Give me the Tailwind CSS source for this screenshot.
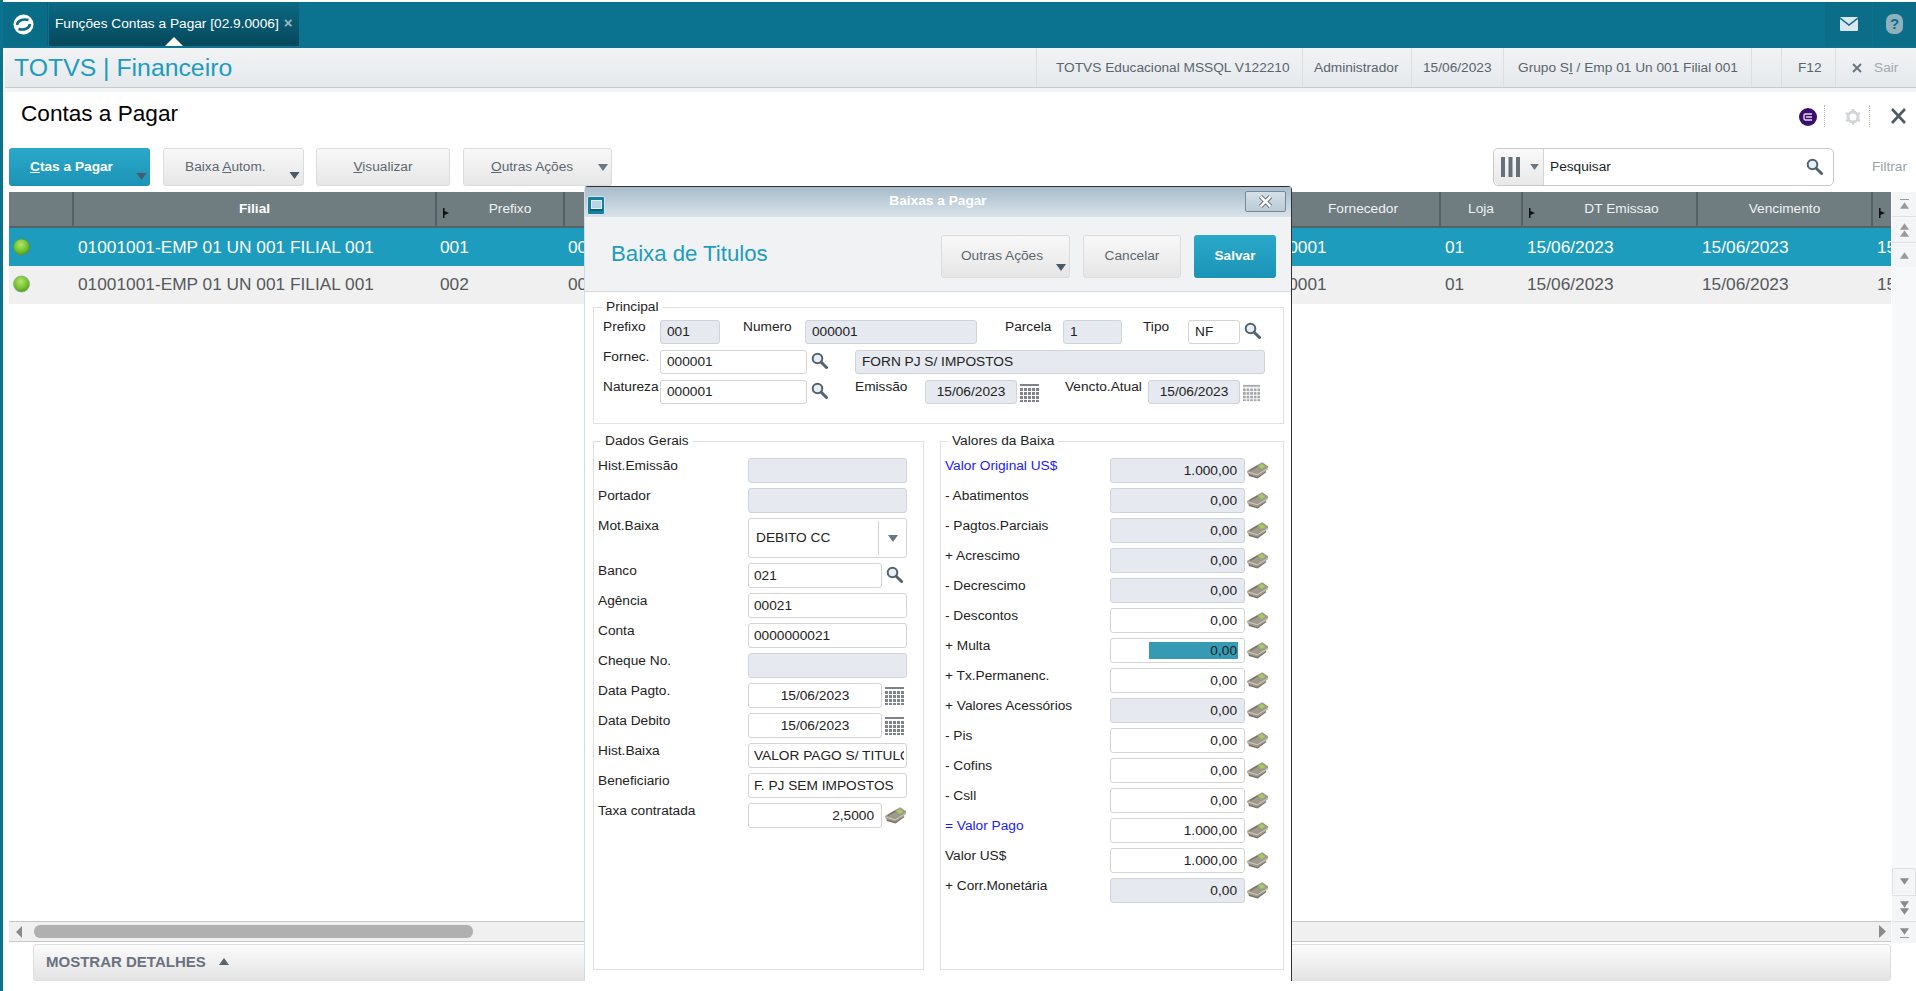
<!DOCTYPE html>
<html lang="pt-BR">
<head>
<meta charset="utf-8">
<title>Baixas a Pagar</title>
<script src="https://cdn.jsdelivr.net/npm/@tailwindcss/browser@4"></script>
</head>
<body class="bg-white font-['Liberation_Sans',Arial,sans-serif] text-[13.7px] leading-[16px] text-[#222]">
<svg class="absolute w-0 h-0" aria-hidden="true">
  <defs>
    <pattern id="gridp" width="4" height="4" patternUnits="userSpaceOnUse"><rect width="3" height="3" fill="#7f8389"/></pattern>
    <radialGradient id="ball" cx="45%" cy="35%" r="65%"><stop offset="0" stop-color="#b5e66a"/><stop offset=".7" stop-color="#6cc02c"/><stop offset="1" stop-color="#4f9a1e"/></radialGradient>
    <symbol id="lupa" viewBox="0 0 17 17"><circle cx="6.500" cy="6.500" r="4.800" fill="#e8eef2" stroke="#52626e" stroke-width="2"/><path d="M10.200 10.200 15.500 15.500" stroke="#52626e" stroke-width="3" stroke-linecap="round"/></symbol>
    <symbol id="cal" viewBox="0 0 20 18"><rect x="0" y="0" width="19" height="2" fill="#7f8389"/><rect x="0" y="3" width="19" height="15" fill="url(#gridp)"/></symbol>
    <symbol id="money" viewBox="0 0 24 18"><path d="M1 10 13 3 17 1 23 5V8L12 16.500 3 14.500 1 11Z" fill="#a09a8c"/><path d="M3 14.500 12 17 21 10.500" fill="none" stroke="#7a7365" stroke-width="1.400"/><path d="M1.500 11 12 14 23 7" fill="none" stroke="#d3d0c7" stroke-width="1"/><path d="M4 9.500 12 5" fill="none" stroke="#77705f" stroke-width="1.400"/><path d="M13 5 16.500 2.500 20 5.500 16.500 8Z" fill="#a2cf58"/></symbol>
    <symbol id="tri" viewBox="0 0 10 7"><path d="M0 0H10L5 7Z" fill="currentColor"/></symbol>
    <symbol id="triup" viewBox="0 0 10 7"><path d="M0 7H10L5 0Z" fill="currentColor"/></symbol>
    <symbol id="mark" viewBox="0 0 6 10"><path d="M0 0H1.500V3L6 5 1.500 7V10H0Z" fill="#111"/></symbol>
  </defs>
</svg>

<div class="relative w-[1916px] h-[991px] overflow-hidden border-l-[3px] border-[#0b7390] flex flex-col">

  <!-- top bar -->
  <div class="mt-[2px] h-[46px] -ml-[3px] bg-[#0b7390] flex shrink-0">
    <div class="w-[48px] h-[44px] bg-[#0a6d88] border-r border-[#0a5f76] flex items-center justify-center">
      <svg width="21" height="21" viewBox="0 0 21 21" fill="none"><circle cx="10.500" cy="10.500" r="10" fill="#fff"/><path d="M4 11C4.500 6.500 10 4.500 15.500 6" stroke="#0a6d88" stroke-width="2.600"/><path d="M5.500 15C11 16.500 16.500 14.500 17 10" stroke="#0a6d88" stroke-width="2.600"/></svg>
    </div>
    <div class="relative ml-px w-[250px] h-[44px] bg-linear-to-b from-[#0b6a83] to-[#06485c] flex items-center pl-[6px] text-white text-[13.7px]">
      <span>Funções Contas a Pagar [02.9.0006]</span>
      <span class="ml-[5px] -mt-[3px] text-[#9db9c4] text-[15px] font-bold">×</span>
      <svg class="absolute left-[116px] bottom-0" width="18" height="9" viewBox="0 0 18 9"><path d="M0 9 9 0 18 9Z" fill="#fff"/></svg>
    </div>
    <div class="ml-auto h-[44px] w-[47px] bg-[#0b6d88] flex items-center justify-center">
      <svg width="18" height="14" viewBox="0 0 18 14"><rect width="18" height="14" rx="1" fill="#dbe7ec"/><path d="M0 1 9 8 18 1" fill="none" stroke="#0b6d88" stroke-width="1.500"/></svg>
    </div>
    <div class="ml-px h-[44px] w-[43px] bg-[#0b6d88] flex items-center justify-center">
      <div class="w-[17px] h-[20px] rounded-[7px] bg-[#8fb0bd] text-[#0b6d88] font-bold text-[15px] flex items-center justify-center">?</div>
    </div>
  </div>

  <!-- module header -->
  <div class="h-[40px] shrink-0 ml-[2px] bg-linear-to-b from-[#f1f3f5] to-[#e6e9ec] border-b border-[#c5cbcf] flex items-center text-[#59656e] text-[13.7px]">
    <div class="ml-[9px] w-[1022px] text-[24.800px] leading-[30px] text-[#1d9cbf]">TOTVS | Financeiro</div>
    <div class="w-[266px] h-full border-l border-[#dcdfe2] flex items-center pl-[19px]">TOTVS Educacional MSSQL V122210</div>
    <div class="w-[109px] h-full border-l border-[#dcdfe2] flex items-center pl-[11px]">Administrador</div>
    <div class="w-[92px] h-full border-l border-[#dcdfe2] flex items-center pl-[11px]">15/06/2023</div>
    <div class="w-[248px] h-full border-l border-[#dcdfe2] flex items-center pl-[14px]"><span>Grupo S<u>I</u> / Emp 01 Un 001 Filial 001</span></div>
    <div class="w-[30px] h-full border-l border-[#dcdfe2]"></div>
    <div class="w-[54px] h-full border-l border-[#dcdfe2] flex items-center pl-[16px]">F12</div>
    <div class="flex-1 h-full border-l border-[#dcdfe2] flex items-center pl-[16px] gap-[12px] text-[#a3abb2]">
      <svg width="10" height="10" viewBox="0 0 10 10"><path d="M1 1 9 9M9 1 1 9" stroke="#6b757d" stroke-width="2"/></svg><span>Sair</span>
    </div>
  </div>
  <div class="h-[4px] shrink-0 bg-[#f3f4f6]"></div>

  <!-- title row -->
  <div class="h-[56px] shrink-0 flex pl-[18px]">
    <div class="pt-[9px] text-[22.600px] leading-[26px] text-black">Contas a Pagar</div>
    <div class="ml-auto pt-[16px] flex items-start">
      <div class="w-[18px] h-[18px] rounded-full bg-[#3b0f6b] flex items-center justify-center">
        <svg width="10" height="8" viewBox="0 0 10 8"><path d="M9 1H2.500A1.500 1.500 0 0 0 1 2.500V5.500A1.500 1.500 0 0 0 2.500 7H9M3 4H9" fill="none" stroke="#e6dcef" stroke-width="1.400"/></svg>
      </div>
      <div class="ml-[7px] h-[22px] -mt-[3px] border-l border-dotted border-[#bbb]"></div>
      <svg class="ml-[20px]" width="16" height="18" viewBox="0 0 16 18"><circle cx="8" cy="9" r="5" fill="none" stroke="#d2d5d8" stroke-width="3"/><path d="M8 1V4M8 14V17M1 5 3.500 6.500M12.500 11.500 15 13M1 13 3.500 11.500M12.500 6.500 15 5" stroke="#d2d5d8" stroke-width="2.400"/></svg>
      <div class="ml-[8px] h-[22px] -mt-[3px] border-l border-dotted border-[#bbb]"></div>
      <svg class="ml-[21px] mr-[10px]" width="15" height="16" viewBox="0 0 15 16"><path d="M1 1 14 15M14 1 1 15" stroke="#4e5a63" stroke-width="2.600"/></svg>
    </div>
  </div>

  <!-- toolbar -->
  <div class="h-[38px] shrink-0 flex pl-[6px] text-[#5c6770]">
    <div class="relative w-[141px] rounded-[3px] bg-linear-to-b from-[#2ba9ca] to-[#1b93b6] flex items-center pl-[21px] text-white font-bold">
      <span><u>C</u>tas a Pagar</span>
      <svg class="absolute right-[3px] bottom-[6px] w-[11px] h-[7px] text-[#4a5a66]"><use href="#tri"/></svg>
    </div>
    <div class="relative ml-[13px] w-[141px] rounded-[3px] border border-[#dcdcdc] bg-linear-to-b from-[#f8f8f8] to-[#e6e6e6] flex items-center pl-[21px]">
      <span>Baixa <u>A</u>utom.</span>
      <svg class="absolute right-[3px] bottom-[6px] w-[11px] h-[7px] text-[#4a5a66]"><use href="#tri"/></svg>
    </div>
    <div class="ml-[12px] w-[134px] rounded-[3px] border border-[#dcdcdc] bg-linear-to-b from-[#f8f8f8] to-[#e6e6e6] flex items-center justify-center"><span><u>V</u>isualizar</span></div>
    <div class="relative ml-[13px] w-[149px] rounded-[3px] border border-[#dcdcdc] bg-linear-to-b from-[#f8f8f8] to-[#e6e6e6] flex items-center pl-[27px]">
      <span><u>O</u>utras Ações</span>
      <svg class="absolute right-[3px] top-[15px] w-[10px] h-[7px] text-[#6b7680]"><use href="#tri"/></svg>
    </div>
    <div class="ml-[881px] w-[341px] rounded-[5px] border border-[#c9c9c9] bg-white flex">
      <div class="w-[50px] rounded-l-[5px] bg-linear-to-b from-[#fafafa] to-[#e8e8e8] border-r border-[#d5d5d5] flex items-center pl-[7px]">
        <svg width="19" height="20" viewBox="0 0 19 20"><path d="M0 0H4V20H0ZM7.500 0H11.500V20H7.500ZM15 0H19V20H15Z" fill="#66707a"/></svg>
        <svg class="ml-[10px] w-[9px] h-[6px] text-[#6b7680]"><use href="#tri"/></svg>
      </div>
      <div class="flex-1 flex items-center pl-[6px] text-[#222]">Pesquisar</div>
      <svg class="mr-[10px] mt-[9px] w-[17px] h-[17px]"><use href="#lupa"/></svg>
    </div>
    <div class="ml-[38px] flex items-center text-[#9aa3aa]">Filtrar</div>
  </div>
  <div class="h-[6px] shrink-0"></div>

  <!-- browse -->
  <div class="flex-1 min-h-0 flex pl-[6px]">
    <div class="w-[1882px] flex flex-col">
      <div class="h-[36px] shrink-0 flex bg-[#6f7c80] text-[#f0f2f3] border-b-2 border-[#566266]">
        <div class="w-[65px] shrink-0 border-r-2 border-[#566266]"></div>
        <div class="w-[363px] shrink-0 border-r-2 border-[#566266] flex items-center justify-center font-bold text-white">Filial</div>
        <div class="relative w-[128px] shrink-0 border-r-2 border-[#566266] flex items-center justify-center pl-[20px]">Prefixo
          <svg class="absolute left-[6px] top-[16px] w-[6px] h-[10px]"><use href="#mark"/></svg></div>
        <div class="w-[700px] shrink-0 border-r-2 border-[#566266]"></div>
        <div class="w-[176px] shrink-0 border-r-2 border-[#566266] flex items-center justify-center pl-[22px]">Fornecedor</div>
        <div class="w-[82px] shrink-0 border-r-2 border-[#566266] flex items-center justify-center">Loja</div>
        <div class="relative w-[175px] shrink-0 border-r-2 border-[#566266] flex items-center justify-center pl-[24px]">DT Emissao
          <svg class="absolute left-[6px] top-[16px] w-[6px] h-[10px]"><use href="#mark"/></svg></div>
        <div class="w-[175px] shrink-0 border-r-2 border-[#566266] flex items-center justify-center">Vencimento</div>
        <div class="relative flex-1"><svg class="absolute left-[6px] top-[16px] w-[6px] h-[10px]"><use href="#mark"/></svg></div>
      </div>
      <div class="h-[38px] shrink-0 flex items-center bg-[#1d9cbd] text-white text-[17.300px] leading-[20px] whitespace-nowrap overflow-hidden">
        <div class="w-[65px] shrink-0 pl-[4px] flex items-center"><svg width="17" height="20" viewBox="0 0 17 20"><circle cx="8.500" cy="10" r="8" fill="url(#ball)" stroke="#5f8f52" stroke-width=".8"/></svg></div>
        <div class="w-[363px] shrink-0 pl-[4px]">01001001-EMP 01 UN 001 FILIAL 001</div>
        <div class="w-[128px] shrink-0 pl-[3px]">001</div>
        <div class="w-[700px] shrink-0 pl-[3px]">000001</div>
        <div class="w-[176px] shrink-0 pl-[4px]">000001</div>
        <div class="w-[82px] shrink-0 pl-[4px]">01</div>
        <div class="w-[175px] shrink-0 pl-[4px]">15/06/2023</div>
        <div class="w-[175px] shrink-0 pl-[4px]">15/06/2023</div>
        <div class="shrink-0 pl-[4px]">15/06/2023</div>
      </div>
      <div class="h-[38px] shrink-0 flex items-center pb-[2px] bg-[#f0f0f0] text-[#55595c] text-[17.300px] leading-[20px] whitespace-nowrap overflow-hidden">
        <div class="w-[65px] shrink-0 pl-[4px] flex items-center"><svg width="17" height="20" viewBox="0 0 17 20"><circle cx="8.500" cy="10" r="8" fill="url(#ball)" stroke="#8aa985" stroke-width=".8"/></svg></div>
        <div class="w-[363px] shrink-0 pl-[4px]">01001001-EMP 01 UN 001 FILIAL 001</div>
        <div class="w-[128px] shrink-0 pl-[3px]">002</div>
        <div class="w-[700px] shrink-0 pl-[3px]">000002</div>
        <div class="w-[176px] shrink-0 pl-[4px]">000001</div>
        <div class="w-[82px] shrink-0 pl-[4px]">01</div>
        <div class="w-[175px] shrink-0 pl-[4px]">15/06/2023</div>
        <div class="w-[175px] shrink-0 pl-[4px]">15/06/2023</div>
        <div class="shrink-0 pl-[4px]">15/06/2023</div>
      </div>
      <div class="flex-1"></div>
      <div class="h-[21px] shrink-0 flex items-center bg-[#f0f0f0] border-y border-[#c8c8c8] relative">
        <svg class="ml-[7px] w-[6px] h-[12px]" viewBox="0 0 6 12"><path d="M6 0V12L0 6Z" fill="#8a8a8a"/></svg>
        <div class="ml-[12px] w-[439px] h-[13px] rounded-[6px] bg-[#b0b0b0]"></div>
        <svg class="ml-auto mr-[5px] w-[7px] h-[13px]" viewBox="0 0 7 13"><path d="M0 0V13L7 6.500Z" fill="#8a8a8a"/></svg>
      </div>
      <div class="h-[2px] shrink-0"></div>
      <div class="ml-[24px] h-[37px] shrink-0 rounded-[3px] border border-[#dedede] bg-linear-to-b from-[#fbfbfb] to-[#e4e4e4] flex items-center pl-[12px] pb-[2px] text-[#6a7280] font-bold text-[15px]">
        <span>MOSTRAR DETALHES</span>
        <svg class="ml-[13px] w-[10px] h-[7px] text-[#5a626c]"><use href="#triup"/></svg>
      </div>
      <div class="h-[10px] shrink-0"></div>
    </div>
    <div class="ml-[1px] w-[24px] h-[751px] flex flex-col bg-[#f7f8fa]">
      <div class="h-[25px] bg-[#f4f5f6] border-b border-[#dfe1e3] flex flex-col items-center justify-center text-[#9a9a9a]"><div class="w-[9px] border-t border-[#9a9a9a] mb-[2px]"></div><svg class="w-[9px] h-[7px]"><use href="#triup"/></svg></div>
      <div class="mt-px h-[25px] bg-[#f4f5f6] border-b border-[#dfe1e3] flex flex-col items-center justify-center text-[#9a9a9a]"><svg class="w-[9px] h-[7px]"><use href="#triup"/></svg><svg class="w-[9px] h-[7px]"><use href="#triup"/></svg></div>
      <div class="mt-px h-[23px] bg-[#f4f5f6] flex items-center justify-center text-[#9a9a9a]"><svg class="w-[9px] h-[7px]"><use href="#triup"/></svg></div>
      <div class="flex-1"></div>
      <div class="h-[26px] bg-[#f4f5f6] border-t border-x border-[#dfe1e3] rounded-t-[3px] flex items-center justify-center text-[#8a8a8a]"><svg class="w-[9px] h-[7px]"><use href="#tri"/></svg></div>
      <div class="mt-px h-[25px] bg-[#f4f5f6] border-t border-[#dfe1e3] flex flex-col items-center justify-center text-[#8a8a8a]"><svg class="w-[9px] h-[7px]"><use href="#tri"/></svg><svg class="w-[9px] h-[7px]"><use href="#tri"/></svg></div>
      <div class="mt-px h-[22px] bg-[#f4f5f6] border-t border-[#dfe1e3] flex flex-col items-center justify-center text-[#8a8a8a]"><svg class="w-[9px] h-[7px]"><use href="#tri"/></svg><div class="w-[9px] border-t border-[#9a9a9a] mt-[2px]"></div></div>
    </div>
  </div>

  <!-- modal -->
  <div class="absolute left-[581px] top-[186px] w-[708px] h-[795px] bg-white border-t border-r border-[#2f3336] border-l border-l-[#cfdce8] rounded-t-[4px] flex flex-col">
    <div class="relative h-[30px] shrink-0 bg-linear-to-b from-[#a9bccb] to-[#d8e3ea] flex items-center justify-center font-bold text-white">
      <div class="absolute left-[2px] top-[9px] w-[18px] h-[19px] rounded-[2px] bg-[#14809f] border border-[#d5e4ec] flex flex-col items-center justify-center">
        <div class="w-[11px] h-[9px] bg-[#b8d4e2] border border-[#e4f0f5]"></div><div class="w-[13px] h-[2px] bg-[#0b5f76]"></div>
      </div>
      <span class="-mt-[3px]">Baixas a Pagar</span>
      <div class="absolute right-[5px] top-[4px] w-[41px] h-[21px] rounded-[2px] border border-[#75899b] bg-linear-to-b from-[#d5dfe7] to-[#bccbd7] flex items-center justify-center">
        <svg width="15" height="15" viewBox="0 0 15 15"><path d="M2.500 2.500 12.500 12.500M12.500 2.500 2.500 12.500" stroke="#5f6a72" stroke-width="4.500"/><path d="M2.500 2.500 12.500 12.500M12.500 2.500 2.500 12.500" stroke="#fff" stroke-width="2.500"/></svg>
      </div>
    </div>
    <div class="h-[75px] shrink-0 bg-[#f0f2f3] border-b border-[#d6d9dc] flex items-center text-[#5c6770]">
      <div class="ml-[26px] w-[330px] text-[22.200px] leading-[28px] text-[#1d9cbf]">Baixa de Titulos</div>
      <div class="relative mt-[4px] w-[129px] h-[43px] rounded-[3px] border border-[#dcdcdc] bg-linear-to-b from-[#f8f8f8] to-[#e6e6e6] flex items-center justify-center pr-[7px]">Outras Ações
        <svg class="absolute right-[3px] bottom-[6px] w-[10px] h-[7px] text-[#4a5a66]"><use href="#tri"/></svg></div>
      <div class="mt-[4px] ml-[13px] w-[98px] h-[43px] rounded-[3px] border border-[#dcdcdc] bg-linear-to-b from-[#f8f8f8] to-[#e6e6e6] flex items-center justify-center">Cancelar</div>
      <div class="mt-[4px] ml-[13px] w-[82px] h-[43px] rounded-[3px] bg-linear-to-b from-[#2ba9ca] to-[#1b93b6] flex items-center justify-center font-bold text-white">Salvar</div>
    </div>

    <div class="pl-[8px]">
      <fieldset class="mt-[7px] w-[691px] h-[125px] border border-[#dcdfe3] pl-[9px] pt-[5px]">
        <legend class="-ml-px px-[4px] leading-[16px]">Principal</legend>
        <div class="flex h-[24px]">
          <span class="w-[57px] -mt-px">Prefixo</span>
          <div class="w-[60px] rounded-[3px] border border-[#cfd3da] bg-[#e6e9f0] flex items-center pl-[6px]">001</div>
          <span class="ml-[23px] w-[62px] -mt-px">Numero</span>
          <div class="w-[172px] rounded-[3px] border border-[#cfd3da] bg-[#e6e9f0] flex items-center pl-[6px]">000001</div>
          <span class="ml-[28px] w-[58px] -mt-px">Parcela</span>
          <div class="w-[59px] rounded-[3px] border border-[#cfd3da] bg-[#e6e9f0] flex items-center pl-[6px]">1</div>
          <span class="ml-[21px] w-[45px] -mt-px">Tipo</span>
          <div class="w-[52px] rounded-[3px] border border-[#d4d4d4] bg-white flex items-center pl-[6px]">NF</div>
          <svg class="ml-[4px] mt-[2px] w-[17px] h-[17px]"><use href="#lupa"/></svg>
        </div>
        <div class="mt-[6px] flex h-[24px]">
          <span class="w-[57px] -mt-px">Fornec.</span>
          <div class="w-[147px] rounded-[3px] border border-[#d4d4d4] bg-white flex items-center pl-[6px]">000001</div>
          <svg class="ml-[4px] mt-[2px] w-[17px] h-[17px]"><use href="#lupa"/></svg>
          <div class="ml-[27px] w-[410px] rounded-[3px] border border-[#cfd3da] bg-[#e6e9f0] flex items-center pl-[6px]">FORN PJ S/ IMPOSTOS</div>
        </div>
        <div class="mt-[6px] flex h-[24px]">
          <span class="w-[57px] -mt-px">Natureza</span>
          <div class="w-[147px] rounded-[3px] border border-[#d4d4d4] bg-white flex items-center pl-[6px]">000001</div>
          <svg class="ml-[4px] mt-[2px] w-[17px] h-[17px]"><use href="#lupa"/></svg>
          <span class="ml-[27px] w-[70px] -mt-px">Emissão</span>
          <div class="w-[92px] rounded-[3px] border border-[#cfd3da] bg-[#e6e9f0] flex items-center justify-center">15/06/2023</div>
          <svg class="ml-[3px] mt-[4px] w-[20px] h-[18px]"><use href="#cal"/></svg>
          <span class="ml-[25px] w-[83px] -mt-px">Vencto.Atual</span>
          <div class="w-[92px] rounded-[3px] border border-[#cfd3da] bg-[#e6e9f0] flex items-center justify-center">15/06/2023</div>
          <svg class="ml-[3px] mt-[4px] w-[18px] h-[18px] opacity-70"><use href="#cal"/></svg>
        </div>
      </fieldset>

      <div class="mt-[9px] flex">
        <fieldset class="w-[331px] h-[537px] border border-[#dcdfe3] pl-[4px] pt-[9px]">
          <legend class="ml-[3px] px-[4px] leading-[16px]">Dados Gerais</legend>
          <div class="flex flex-col gap-[5px]">
            <div class="flex h-[25px]"><span class="w-[150px]">Hist.Emissão</span><div class="w-[159px] rounded-[3px] border border-[#cfd3da] bg-[#e6e9f0]"></div></div>
            <div class="flex h-[25px]"><span class="w-[150px]">Portador</span><div class="w-[159px] rounded-[3px] border border-[#cfd3da] bg-[#e6e9f0]"></div></div>
            <div class="flex h-[40px]"><span class="w-[150px]">Mot.Baixa</span>
              <div class="w-[159px] rounded-[3px] border border-[#d4d4d4] bg-white flex items-center pl-[7px]"><span class="w-[122px]">DEBITO CC</span><div class="w-[28px] h-[34px] border-l border-[#d4d4d4] flex items-center justify-center text-[#6b7680]"><svg class="w-[10px] h-[7px]"><use href="#tri"/></svg></div></div></div>
            <div class="flex h-[25px]"><span class="w-[150px]">Banco</span><div class="w-[134px] rounded-[3px] border border-[#d4d4d4] bg-white flex items-center pl-[5px]">021</div><svg class="ml-[4px] mt-[3px] w-[17px] h-[17px]"><use href="#lupa"/></svg></div>
            <div class="flex h-[25px]"><span class="w-[150px]">Agência</span><div class="w-[159px] rounded-[3px] border border-[#d4d4d4] bg-white flex items-center pl-[5px]">00021</div></div>
            <div class="flex h-[25px]"><span class="w-[150px]">Conta</span><div class="w-[159px] rounded-[3px] border border-[#d4d4d4] bg-white flex items-center pl-[5px]">0000000021</div></div>
            <div class="flex h-[25px]"><span class="w-[150px]">Cheque No.</span><div class="w-[159px] rounded-[3px] border border-[#cfd3da] bg-[#e6e9f0]"></div></div>
            <div class="flex h-[25px]"><span class="w-[150px]">Data Pagto.</span><div class="w-[134px] rounded-[3px] border border-[#d4d4d4] bg-white flex items-center justify-center">15/06/2023</div><svg class="ml-[3px] mt-[4px] w-[20px] h-[18px]"><use href="#cal"/></svg></div>
            <div class="flex h-[25px]"><span class="w-[150px]">Data Debito</span><div class="w-[134px] rounded-[3px] border border-[#d4d4d4] bg-white flex items-center justify-center">15/06/2023</div><svg class="ml-[3px] mt-[4px] w-[20px] h-[18px]"><use href="#cal"/></svg></div>
            <div class="flex h-[25px]"><span class="w-[150px]">Hist.Baixa</span><div class="w-[159px] rounded-[3px] border border-[#d4d4d4] bg-white flex items-center pl-[5px] pr-[2px] overflow-hidden whitespace-nowrap"><span class="overflow-hidden">VALOR PAGO S/ TITULO</span></div></div>
            <div class="flex h-[25px]"><span class="w-[150px]">Beneficiario</span><div class="w-[159px] rounded-[3px] border border-[#d4d4d4] bg-white flex items-center pl-[5px] whitespace-nowrap overflow-hidden">F. PJ SEM IMPOSTOS</div></div>
            <div class="flex h-[25px]"><span class="w-[150px]">Taxa contratada</span><div class="w-[134px] rounded-[3px] border border-[#d4d4d4] bg-white flex items-center justify-end pr-[7px]">2,5000</div><svg class="ml-[2px] mt-[3px] w-[23px] h-[18px]"><use href="#money"/></svg></div>
          </div>
        </fieldset>

        <fieldset class="ml-[16px] w-[344px] h-[537px] border border-[#dcdfe3] pl-[4px] pt-[9px]">
          <legend class="ml-[3px] px-[4px] leading-[16px]">Valores da Baixa</legend>
          <div class="flex flex-col gap-[5px]">
            <div class="flex h-[25px]"><span class="w-[165px] text-[#1a1aff]">Valor Original US$</span><div class="w-[135px] rounded-[3px] border border-[#cfd3da] bg-[#e6e9f0] flex items-center justify-end pr-[7px]">1.000,00</div><svg class="ml-[1px] mt-[3px] w-[23px] h-[18px]"><use href="#money"/></svg></div>
            <div class="flex h-[25px]"><span class="w-[165px]">- Abatimentos</span><div class="w-[135px] rounded-[3px] border border-[#cfd3da] bg-[#e6e9f0] flex items-center justify-end pr-[7px]">0,00</div><svg class="ml-[1px] mt-[3px] w-[23px] h-[18px]"><use href="#money"/></svg></div>
            <div class="flex h-[25px]"><span class="w-[165px]">- Pagtos.Parciais</span><div class="w-[135px] rounded-[3px] border border-[#cfd3da] bg-[#e6e9f0] flex items-center justify-end pr-[7px]">0,00</div><svg class="ml-[1px] mt-[3px] w-[23px] h-[18px]"><use href="#money"/></svg></div>
            <div class="flex h-[25px]"><span class="w-[165px]">+ Acrescimo</span><div class="w-[135px] rounded-[3px] border border-[#cfd3da] bg-[#e6e9f0] flex items-center justify-end pr-[7px]">0,00</div><svg class="ml-[1px] mt-[3px] w-[23px] h-[18px]"><use href="#money"/></svg></div>
            <div class="flex h-[25px]"><span class="w-[165px]">- Decrescimo</span><div class="w-[135px] rounded-[3px] border border-[#cfd3da] bg-[#e6e9f0] flex items-center justify-end pr-[7px]">0,00</div><svg class="ml-[1px] mt-[3px] w-[23px] h-[18px]"><use href="#money"/></svg></div>
            <div class="flex h-[25px]"><span class="w-[165px]">- Descontos</span><div class="w-[135px] rounded-[3px] border border-[#d4d4d4] bg-white flex items-center justify-end pr-[7px]">0,00</div><svg class="ml-[1px] mt-[3px] w-[23px] h-[18px]"><use href="#money"/></svg></div>
            <div class="flex h-[25px]"><span class="w-[165px]">+ Multa</span><div class="w-[135px] rounded-[3px] border border-[#d4d4d4] bg-white flex items-center justify-end pr-[6px]"><div class="w-[89px] h-[17px] bg-[#369ab4] flex items-center justify-end pr-[1px]">0,00</div></div><svg class="ml-[1px] mt-[3px] w-[23px] h-[18px]"><use href="#money"/></svg></div>
            <div class="flex h-[25px]"><span class="w-[165px]">+ Tx.Permanenc.</span><div class="w-[135px] rounded-[3px] border border-[#d4d4d4] bg-white flex items-center justify-end pr-[7px]">0,00</div><svg class="ml-[1px] mt-[3px] w-[23px] h-[18px]"><use href="#money"/></svg></div>
            <div class="flex h-[25px]"><span class="w-[165px]">+ Valores Acessórios</span><div class="w-[135px] rounded-[3px] border border-[#cfd3da] bg-[#e6e9f0] flex items-center justify-end pr-[7px]">0,00</div><svg class="ml-[1px] mt-[3px] w-[23px] h-[18px]"><use href="#money"/></svg></div>
            <div class="flex h-[25px]"><span class="w-[165px]">- Pis</span><div class="w-[135px] rounded-[3px] border border-[#d4d4d4] bg-white flex items-center justify-end pr-[7px]">0,00</div><svg class="ml-[1px] mt-[3px] w-[23px] h-[18px]"><use href="#money"/></svg></div>
            <div class="flex h-[25px]"><span class="w-[165px]">- Cofins</span><div class="w-[135px] rounded-[3px] border border-[#d4d4d4] bg-white flex items-center justify-end pr-[7px]">0,00</div><svg class="ml-[1px] mt-[3px] w-[23px] h-[18px]"><use href="#money"/></svg></div>
            <div class="flex h-[25px]"><span class="w-[165px]">- Csll</span><div class="w-[135px] rounded-[3px] border border-[#d4d4d4] bg-white flex items-center justify-end pr-[7px]">0,00</div><svg class="ml-[1px] mt-[3px] w-[23px] h-[18px]"><use href="#money"/></svg></div>
            <div class="flex h-[25px]"><span class="w-[165px] text-[#1a1aff]">= Valor Pago</span><div class="w-[135px] rounded-[3px] border border-[#d4d4d4] bg-white flex items-center justify-end pr-[7px]">1.000,00</div><svg class="ml-[1px] mt-[3px] w-[23px] h-[18px]"><use href="#money"/></svg></div>
            <div class="flex h-[25px]"><span class="w-[165px]">Valor US$</span><div class="w-[135px] rounded-[3px] border border-[#d4d4d4] bg-white flex items-center justify-end pr-[7px]">1.000,00</div><svg class="ml-[1px] mt-[3px] w-[23px] h-[18px]"><use href="#money"/></svg></div>
            <div class="flex h-[25px]"><span class="w-[165px]">+ Corr.Monetária</span><div class="w-[135px] rounded-[3px] border border-[#cfd3da] bg-[#e6e9f0] flex items-center justify-end pr-[7px]">0,00</div><svg class="ml-[1px] mt-[3px] w-[23px] h-[18px]"><use href="#money"/></svg></div>
          </div>
        </fieldset>
      </div>
    </div>
  </div>
</div>
</body>
</html>
